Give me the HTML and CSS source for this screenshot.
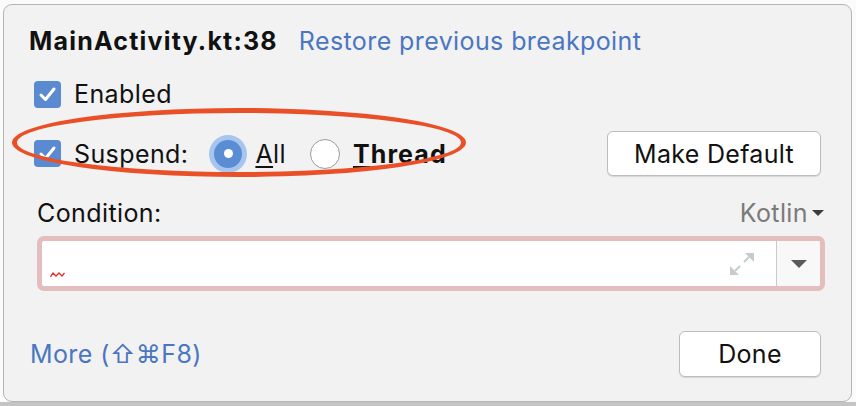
FILE: index.html
```html
<!DOCTYPE html>
<html>
<head>
<meta charset="utf-8">
<link rel="stylesheet" href="styles.css">
</head>
<body>
<div class="popup">
  <div class="title-row">
    <span class="title">MainActivity.kt:38</span>
    <span class="link">Restore previous breakpoint</span>
  </div>
  <div class="check-row enabled-row">
    <span class="cb"><svg width="27" height="27" viewBox="0 0 27 27"><path d="M7 14 L11.5 18.5 L20 8" fill="none" stroke="#fff" stroke-width="3" stroke-linecap="round" stroke-linejoin="round"/></svg></span>
    <span class="lbl">Enabled</span>
  </div>
  <div class="suspend-row">
    <div class="suspend-group">
      <span class="cb"><svg width="27" height="27" viewBox="0 0 27 27"><path d="M7 14 L11.5 18.5 L20 8" fill="none" stroke="#fff" stroke-width="3" stroke-linecap="round" stroke-linejoin="round"/></svg></span>
      <span class="lbl">Suspend:</span>
      <span class="radio on"><span class="dot"></span></span>
      <span class="lbl"><u>A</u>ll</span>
      <span class="radio off"></span>
      <span class="lbl bold"><u>T</u>hread</span>
      <span class="ellipse"></span>
    </div>
    <button class="btn make-default">Make Default</button>
  </div>
  <div class="cond-row">
    <span class="lbl">Condition:</span>
    <span class="lang">Kotlin<svg width="12" height="6" viewBox="0 0 12 6"><path d="M0 0 L12 0 L6 6 Z" fill="#3c3c3c"/></svg></span>
  </div>
  <div class="input">
    <div class="editor">
      <svg class="squiggle" width="15" height="7" viewBox="0 0 15 7"><path d="M0.5 6 L3 2 L6 5 L9 2 L12 5 L14.5 2" fill="none" stroke="#e0302a" stroke-width="1.3"/></svg>
      <svg class="expand" width="26" height="24" viewBox="0 0 26 24"><path d="M16 1 H25 V10 Z" fill="#c5cccc"/><path d="M1 14 V23 H10 Z" fill="#c5cccc"/><path d="M20 5 L15 10 M6 19 L11 14" stroke="#c5cccc" stroke-width="2"/></svg>
    </div>
    <div class="drop">
      <svg width="16" height="8" viewBox="0 0 16 8"><path d="M0 0 L16 0 L8 8 Z" fill="#595959"/></svg>
    </div>
  </div>
  <div class="footer">
    <span class="link">More (⇧⌘F8)</span>
    <button class="btn done">Done</button>
  </div>
</div>
</body>
</html>
```
FILE: styles.css
```css
html, body {
  margin: 0;
  padding: 0;
}
body {
  width: 856px;
  height: 406px;
  overflow: hidden;
  background: linear-gradient(#fbfbfb 0, #fbfbfb 402px, #c4c4c4 402px);
  font-family: "Inter", "Noto Sans", sans-serif;
  font-size: 25px;
  letter-spacing: 0.4px;
  color: #111;
  box-sizing: border-box;
  padding: 4px 4px 0 3px;
}
.popup {
  width: 849px;
  height: 398px;
  box-sizing: border-box;
  background: #f2f2f2;
  border: 1px solid #b4b4b4;
  border-radius: 9px;
  padding: 19px 27px 0 25px;
  display: flex;
  flex-direction: column;
}
.title-row {
  height: 34px;
  display: flex;
  align-items: center;
  gap: 21px;
}
.title {
  font-weight: 700;
  letter-spacing: 1.2px;
  color: #111;
}
.link {
  color: #4a76c2;
}
.check-row {
  display: flex;
  align-items: center;
}
.enabled-row {
  height: 34px;
  margin-top: 19px;
  padding-left: 5px;
}
.cb {
  width: 27px;
  height: 27px;
  border-radius: 4px;
  background: #5a8ad0;
  display: inline-flex;
  flex: none;
}
.lbl {
  color: #111;
  margin-left: 13px;
}
.lbl u {
  text-decoration-thickness: 2px;
  text-underline-offset: 3px;
}
.bold {
  font-weight: 700;
  letter-spacing: 1.1px;
}
.suspend-row {
  height: 45px;
  margin-top: 20px;
  display: flex;
  align-items: center;
  justify-content: space-between;
}
.suspend-group {
  position: relative;
  display: flex;
  align-items: center;
  padding-left: 5px;
}
.radio {
  width: 28px;
  height: 28px;
  border-radius: 50%;
  box-sizing: border-box;
  display: inline-flex;
  align-items: center;
  justify-content: center;
  flex: none;
}
.radio.on {
  background: #5b8dd4;
  box-shadow: 0 0 0 5px #a6c6ef;
  margin-left: 26px;
}
.radio.off {
  background: #fff;
  border: 1.5px solid #9c9c9c;
  width: 30px;
  height: 30px;
  margin-left: 24px;
}
.dot {
  width: 9px;
  height: 9px;
  border-radius: 50%;
  background: #fff;
}
.ellipse {
  position: absolute;
  left: -17px;
  top: -31px;
  width: 454px;
  height: 69px;
  border: 5px solid #ea5028;
  border-radius: 50%;
  box-sizing: border-box;
}
.btn {
  font-family: inherit;
  font-size: 25px;
  letter-spacing: 0.3px;
  color: #111;
  background: #fff;
  border: 1px solid #bdbdbd;
  border-radius: 6px;
  box-shadow: 0 1px 1px rgba(0,0,0,0.12);
  height: 45px;
  padding: 0;
}
.make-default {
  width: 214px;
  margin-right: 3px;
}
.cond-row {
  height: 26px;
  margin-top: 24px;
  display: flex;
  align-items: center;
  justify-content: space-between;
  padding-left: 8px;
}
.cond-row .lbl {
  margin-left: 0;
}
.lang {
  color: #7a7a7a;
  display: flex;
  align-items: center;
  gap: 4px;
  margin-right: 0;
}
.input {
  margin-top: 10px;
  margin-left: 8px;
  margin-right: -1px;
  height: 55px;
  box-sizing: border-box;
  border: 5px solid #e4bdbd;
  border-radius: 7px;
  display: flex;
  background: #fff;
}
.editor {
  flex: 1;
  position: relative;
  display: flex;
  align-items: center;
  justify-content: flex-end;
  padding-right: 21px;
}
.squiggle {
  position: absolute;
  left: 8px;
  top: 30px;
}
.drop {
  width: 43px;
  background: #f8f8f8;
  border-left: 1px solid #c9c9c9;
  display: flex;
  align-items: center;
  justify-content: center;
  border-radius: 0 2px 2px 0;
}
.footer {
  margin-top: 40px;
  height: 46px;
  display: flex;
  align-items: center;
  justify-content: space-between;
  padding-left: 1px;
}
.done {
  width: 142px;
  margin-right: 3px;
  height: 46px;
}
```
